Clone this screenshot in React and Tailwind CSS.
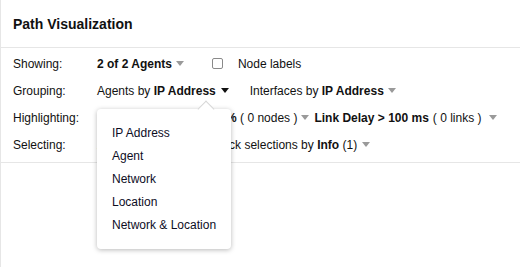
import React from 'react';

function Caret({ dark = false, className = '' }) {
  return (
    <span
      className={`inline-block h-0 w-0 border-x-[4px] border-t-[5px] border-x-transparent align-middle ${
        dark ? 'border-t-[#111]' : 'border-t-[#9a9a9a]'
      } ${className}`}
    />
  );
}

function Row({ label, children }) {
  return (
    <div className="flex h-[27px] items-center">
      <div className="w-[84px] shrink-0">{label}</div>
      <div className="flex items-center whitespace-nowrap">{children}</div>
    </div>
  );
}

const options = ['IP Address', 'Agent', 'Network', 'Location', 'Network & Location'];

export default function App() {
  return (
    <div
      className="relative h-[267px] w-[520px] overflow-hidden border-l border-[#e6e6e6] bg-white text-[12px] text-[#111]"
      style={{ fontFamily: '"Liberation Sans", Arial, sans-serif' }}
    >
      <header className="flex h-[48px] items-center border-b border-[#e6e6e6] px-3 pt-[2px]">
        <h1 className="text-[14px] font-bold">Path Visualization</h1>
      </header>

      <div className="border-b border-[#e6e6e6] px-3 pb-[4px] pt-[2px]">
        <Row label="Showing:">
          <b>2 of 2 Agents</b>
          <Caret className="ml-[4px]" />
          <span className="ml-[28px] inline-block h-[11px] w-[11px] rounded-[2px] border border-[#8a8a8a] bg-white" />
          <span className="ml-[15px]">Node labels</span>
        </Row>
        <Row label="Grouping:">
          <span>Agents by <b>IP Address</b></span>
          <Caret dark className="ml-[5px]" />
          <span className="ml-[21px]">Interfaces by <b>IP Address</b></span>
          <Caret className="ml-[4px]" />
        </Row>
        <Row label="Highlighting:">
          <span>Interfaces with <b>Loss &gt; 5%</b> ( 0 nodes )</span>
          <Caret className="ml-[4px]" />
          <b className="ml-[5px]">Link Delay &gt; 100 ms</b>
          <span className="ml-[4px]">( 0 links )</span>
          <Caret className="ml-[7px]" />
        </Row>
        <Row label="Selecting:">
          <span>
            <b>All</b> Nodes and Links,&nbsp; Stick selections by <b>Info</b> (1)
          </span>
          <Caret className="ml-[5px]" />
        </Row>
      </div>

      <div className="absolute left-[96px] top-[109px] h-[140px] w-[134px] rounded-[4px] bg-white shadow-[0_1px_5px_rgba(0,0,0,0.28)]">
        <span className="absolute left-[103px] top-[-6px] h-[12px] w-[12px] rotate-45 border-l border-t border-[#d6d6d6] bg-white" />
        <ul className="relative pt-[12px]">
          {options.map((o) => (
            <li key={o} className="flex h-[23px] items-center pl-[15px] text-[#0d0d1f]">
              {o}
            </li>
          ))}
        </ul>
      </div>
    </div>
  );
}
